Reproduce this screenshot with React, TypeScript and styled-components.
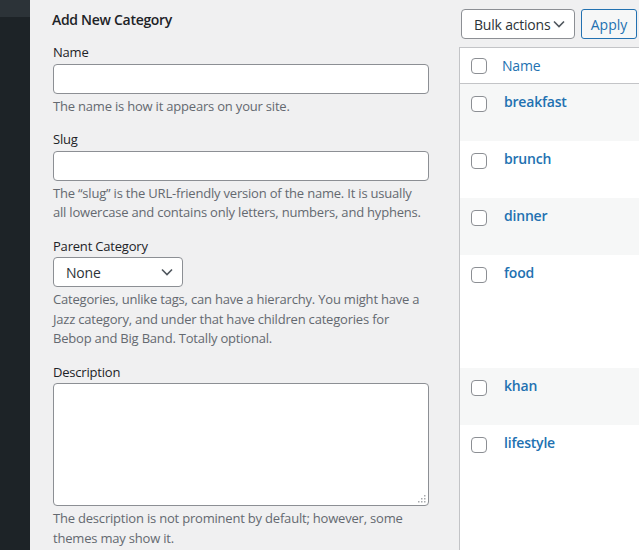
import styled, { createGlobalStyle } from "styled-components";

const GlobalStyle = createGlobalStyle`
  html, body {
    margin: 0;
    padding: 0;
    background: #f0f0f1;
  }
  body {
    font-family: "Open Sans", "Noto Sans", sans-serif;
    font-size: 13px;
    letter-spacing: -0.2px;
    color: #3c434a;
  }
  * { box-sizing: border-box; }
`;

type Term = { name: string; tall?: boolean };

const terms: Term[] = [
  { name: "breakfast" },
  { name: "brunch" },
  { name: "dinner" },
  { name: "food", tall: true },
  { name: "khan" },
  { name: "lifestyle" },
];

export default function App() {
  return (
    <>
      <GlobalStyle />
      <Page>
        <Sidebar>
          <SidebarTop />
        </Sidebar>
        <Content>
          <FormCol>
            <Heading>Add New Category</Heading>

            <Field>
              <Label>Name</Label>
              <TextInput type="text" />
              <Help>The name is how it appears on your site.</Help>
            </Field>

            <Field>
              <Label>Slug</Label>
              <TextInput type="text" />
              <Help>
                The “slug” is the URL-friendly version of the name. It is usually
                all lowercase and contains only letters, numbers, and hyphens.
              </Help>
            </Field>

            <Field>
              <Label>Parent Category</Label>
              <FakeSelect $width={130}>
                <span>None</span>
                <Chevron />
              </FakeSelect>
              <Help>
                Categories, unlike tags, can have a hierarchy. You might have a
                Jazz category, and under that have children categories for Bebop
                and Big Band. Totally optional.
              </Help>
            </Field>

            <Field>
              <Label>Description</Label>
              <AreaWrap>
                <TextArea />
                <Grip viewBox="0 0 9 9">
                  <rect x="7" y="1" width="1.5" height="1.5" />
                  <rect x="4" y="4" width="1.5" height="1.5" />
                  <rect x="7" y="4" width="1.5" height="1.5" />
                  <rect x="1" y="7" width="1.5" height="1.5" />
                  <rect x="4" y="7" width="1.5" height="1.5" />
                  <rect x="7" y="7" width="1.5" height="1.5" />
                </Grip>
              </AreaWrap>
              <Help>
                The description is not prominent by default; however, some
                themes may show it.
              </Help>
            </Field>
          </FormCol>

          <ListCol>
            <TableNav>
              <FakeSelect $width={114}>
                <span>Bulk actions</span>
                <Chevron />
              </FakeSelect>
              <ApplyButton>Apply</ApplyButton>
            </TableNav>
            <Table>
              <HeadRow>
                <CheckCell>
                  <Checkbox />
                </CheckCell>
                <HeadName>Name</HeadName>
              </HeadRow>
              {terms.map((t, i) => (
                <Row key={t.name} $striped={i % 2 === 0} $tall={t.tall}>
                  <CheckCell $top={4}>
                    <Checkbox />
                  </CheckCell>
                  <TermName>{t.name}</TermName>
                </Row>
              ))}
            </Table>
          </ListCol>
        </Content>
      </Page>
    </>
  );
}

function Chevron() {
  return (
    <ChevronSvg viewBox="0 0 12 8">
      <polyline points="1,1.5 6,6.5 11,1.5" />
    </ChevronSvg>
  );
}

const Page = styled.div`
  display: flex;
  width: 639px;
  height: 550px;
  overflow: hidden;
`;

const Sidebar = styled.div`
  width: 30px;
  flex-shrink: 0;
  background: #1d2327;
`;

const SidebarTop = styled.div`
  height: 17px;
  background: #2c3338;
`;

const Content = styled.div`
  flex: 1;
  display: flex;
  gap: 30px;
  min-width: 0;
`;

const FormCol = styled.div`
  width: 399px;
  flex-shrink: 0;
  padding-left: 23px;
`;

const Heading = styled.h2`
  margin: 10px 0 13px -1px;
  font-size: 14px;
  line-height: 20px;
  font-weight: 600;
  letter-spacing: -0.3px;
  color: #1d2327;
`;

const Field = styled.div`
  margin-bottom: 14px;
`;

const Label = styled.label`
  display: block;
  line-height: 19.5px;
  margin-bottom: 1px;
  color: #1d2327;
`;

const TextInput = styled.input`
  display: block;
  width: 376px;
  height: 30px;
  margin: 0;
  border: 1px solid #8c8f94;
  border-radius: 4px;
  background: #fff;
  font: inherit;
`;

const Help = styled.p`
  margin: 3px 0 0;
  line-height: 19.5px;
  color: #646970;
  width: 370px;
`;

const FakeSelect = styled.div<{ $width: number }>`
  display: flex;
  align-items: center;
  justify-content: space-between;
  width: ${(p) => p.$width}px;
  height: 30px;
  padding: 0 9px 0 12px;
  border: 1px solid #8c8f94;
  border-radius: 4px;
  background: #fff;
  font-size: 14px;
  white-space: nowrap;
  color: #2c3338;
`;

const ChevronSvg = styled.svg`
  width: 12px;
  height: 8px;
  flex-shrink: 0;
  fill: none;
  stroke: #50575e;
  stroke-width: 1.6;
`;

const AreaWrap = styled.div`
  position: relative;
  width: 376px;
  height: 123px;
  margin-bottom: 3px;
`;

const TextArea = styled.textarea`
  display: block;
  width: 100%;
  height: 100%;
  margin: 0;
  border: 1px solid #8c8f94;
  border-radius: 4px;
  background: #fff;
  resize: none;
  font: inherit;
`;

const Grip = styled.svg`
  position: absolute;
  right: 3px;
  bottom: 3px;
  width: 9px;
  height: 9px;
  fill: #a7aaad;
`;

const ListCol = styled.div`
  flex: 1;
  display: flex;
  flex-direction: column;
  min-width: 0;
`;

const TableNav = styled.div`
  display: flex;
  gap: 6px;
  margin: 9px 0 8px 2px;
`;

const ApplyButton = styled.button`
  height: 30px;
  width: 56px;
  padding: 0;
  border: 1px solid #2271b1;
  border-radius: 3px;
  background: #f6f7f7;
  color: #2271b1;
  font: inherit;
  font-size: 14px;
  flex-shrink: 0;
`;

const Table = styled.div`
  flex: 1;
  width: 220px;
  background: #fff;
  border-top: 1px solid #c3c4c7;
  border-left: 1px solid #c3c4c7;
`;

const HeadRow = styled.div`
  display: flex;
  align-items: center;
  height: 36px;
  border-bottom: 1px solid #c3c4c7;
`;

const Row = styled.div<{ $striped: boolean; $tall?: boolean }>`
  display: flex;
  align-items: flex-start;
  height: ${(p) => (p.$tall ? 113 : 57)}px;
  padding-top: 8px;
  background: ${(p) => (p.$striped ? "#f6f7f7" : "#fff")};
`;

const CheckCell = styled.div<{ $top?: number }>`
  width: 42px;
  padding-left: 11px;
  padding-top: ${(p) => p.$top ?? 0}px;
  flex-shrink: 0;
`;

const Checkbox = styled.span`
  display: block;
  width: 16px;
  height: 16px;
  border: 1px solid #8c8f94;
  border-radius: 4px;
  background: #fff;
`;

const HeadName = styled.span`
  font-size: 14px;
  color: #2271b1;
`;

const TermName = styled.a`
  font-size: 14px;
  line-height: 20px;
  margin-left: 2px;
  font-weight: 600;
  color: #2271b1;
`;
